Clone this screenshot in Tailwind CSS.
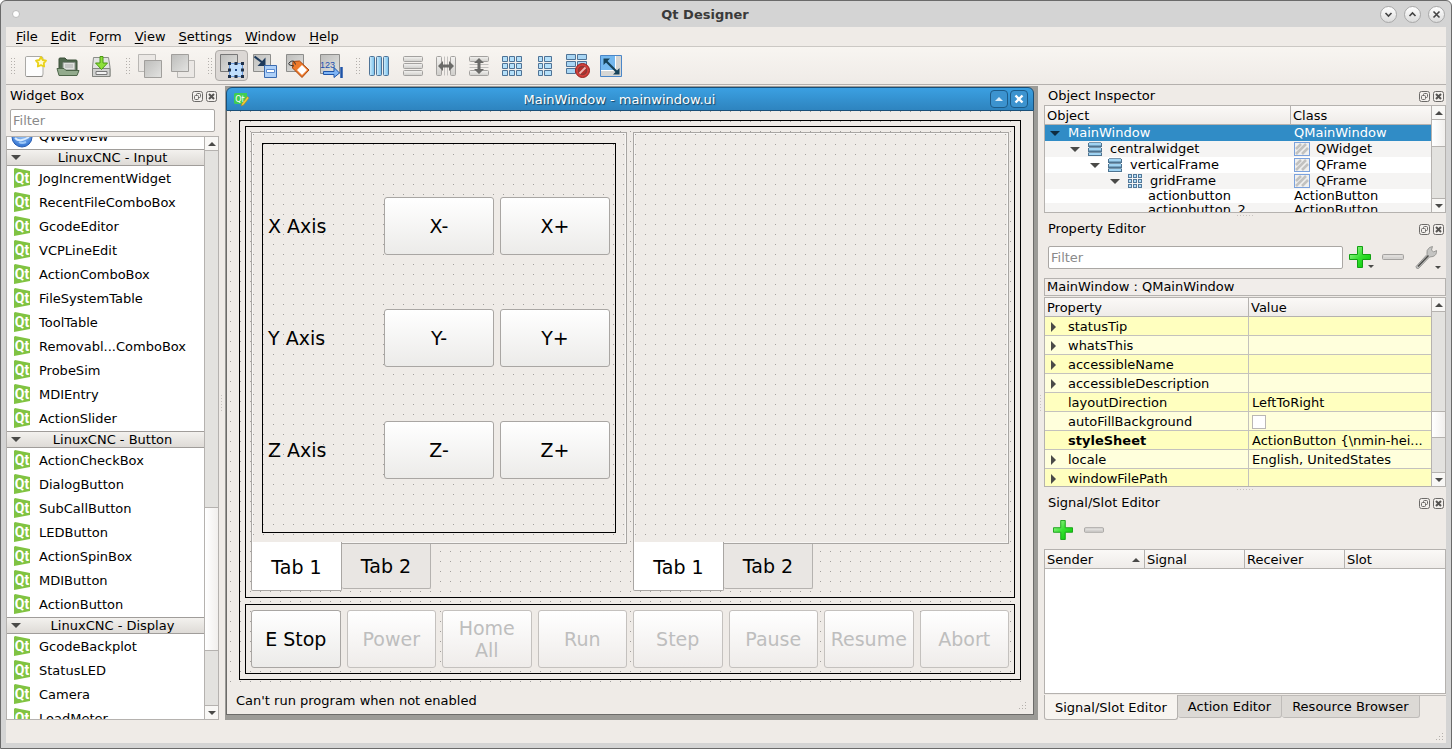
<!DOCTYPE html>
<html lang="en">
<head>
    <meta charset="UTF-8">
    <meta name="viewport" content="width=device-width, initial-scale=1.0">
    <title>Qt Designer</title>
    <script src="https://cdn.jsdelivr.net/npm/@tailwindcss/browser@4"></script>
</head>
<body class="bg-white font-['DejaVu_Sans',sans-serif] text-[13px] leading-4 text-black">

    <!-- Icon definitions -->
    <svg class="absolute w-0 h-0" aria-hidden="true">
        <defs>
            <linearGradient id="blueH" x1="0" y1="0" x2="1" y2="0"><stop offset="0" stop-color="#d3effd"/><stop offset="1" stop-color="#74bdea"/></linearGradient>
            <linearGradient id="blueV" x1="0" y1="0" x2="0" y2="1"><stop offset="0" stop-color="#c3e6fa"/><stop offset="1" stop-color="#6fb4e0"/></linearGradient>
            <linearGradient id="grayV" x1="0" y1="0" x2="0" y2="1"><stop offset="0" stop-color="#f4f3f1"/><stop offset="1" stop-color="#cfcecb"/></linearGradient>
            <linearGradient id="sheet" x1="0" y1="0" x2="1" y2="1"><stop offset="0" stop-color="#bdbdbb"/><stop offset="1" stop-color="#e3e3e1"/></linearGradient>
            <linearGradient id="greenP" x1="0" y1="0" x2="1" y2="1"><stop offset="0" stop-color="#b5f8a8"/><stop offset="0.5" stop-color="#35e030"/><stop offset="1" stop-color="#00c400"/></linearGradient>
            <radialGradient id="globe" cx="0.5" cy="0.3" r="0.7"><stop offset="0" stop-color="#b9dcff"/><stop offset="1" stop-color="#2c6fd0"/></radialGradient>
        </defs>
        <symbol id="qt" viewBox="0 0 16 20">
            <path d="M0 1 1 0 16 3V17L0 20Z" fill="#80c342"/>
            <text x="8" y="15" text-anchor="middle" font-family="Roboto,sans-serif" font-weight="bold" font-size="14" fill="#fff">Qt</text>
        </symbol>
        <symbol id="web" viewBox="0 0 22 22">
            <circle cx="11" cy="11" r="10" fill="url(#globe)" stroke="#2a5db0"/>
            <path d="M4 12q3 3 7 2t7-3" fill="none" stroke="#d8ebff" stroke-width="2"/>
            <path d="M8 16q3 2 7 0" fill="none" stroke="#9cc8f8" stroke-width="2"/>
        </symbol>
        <symbol id="float" viewBox="0 0 11 11">
            <rect x="0.5" y="0.5" width="10" height="10" rx="2" fill="#f3f0ed" stroke="#6c6a68"/>
            <rect x="4.500" y="2.500" width="4" height="4" rx="1" fill="none" stroke="#6c6a68"/>
            <rect x="2.500" y="4.500" width="4" height="4" rx="1" fill="#f3f0ed" stroke="#6c6a68"/>
        </symbol>
        <symbol id="close" viewBox="0 0 11 11">
            <rect x="0.5" y="0.5" width="10" height="10" rx="2" fill="#f3f0ed" stroke="#6c6a68"/>
            <path d="M3 3 8 8M8 3 3 8" stroke="#555351" stroke-width="2"/>
        </symbol>
        <symbol id="up" viewBox="0 0 8 4"><path d="M0 4 4 0 8 4Z" fill="#4a4a48"/></symbol>
        <symbol id="down" viewBox="0 0 8 4"><path d="M0 0H8L4 4Z" fill="#4a4a48"/></symbol>
        <symbol id="branch" viewBox="0 0 10 5"><path d="M0 0H10L5 5Z" fill="#4a4a48"/></symbol>
        <symbol id="plus" viewBox="0 0 22 22">
            <path d="M8.500.5H13.500V8.500H21.500V13.500H13.500V21.500H8.500V13.500H.5V8.500H8.500Z" fill="url(#greenP)" stroke="#12a012" stroke-linejoin="round"/>
        </symbol>
        <symbol id="minus" viewBox="0 0 22 22">
            <rect x="0.5" y="8.500" width="21" height="5" rx="1" fill="#d4d2d0" stroke="#a4a2a0"/>
            <path d="M2 10H20" stroke="#e8e6e4"/>
        </symbol>
        <symbol id="wrench" viewBox="0 0 24 24">
            <path d="M2 21.500 13 9.500Q12 5 15.500 2.500L18.500 1.500 17.500 5 19.500 7 22.500 5.500Q23 10 19 11.500L15.500 12 4.500 23.500Q2 24 2 21.500Z" fill="#c4c4c2" stroke="#8a8a88" stroke-width="0.800"/>
            <path d="M4 21.500 14.500 10.500" stroke="#4c4c4a" stroke-width="1.500"/>
        </symbol>
        <symbol id="vbox" viewBox="0 0 14 14">
            <path d="M0 1H14V5H0ZM0 6H14V10H0ZM0 10.500H14V14H0Z" fill="#4d7390"/>
            <path d="M1 0H13V3.500H1ZM1 5.500H13V8.500H1ZM1 10.500H13V13H1Z" fill="#9fd3f2"/>
            <path d="M1 0.500H13M1 5.500H13M1 10.500H13" stroke="#7796ad"/>
        </symbol>
        <symbol id="gridS" viewBox="0 0 14 14">
            <path d="M0 0h4v4h-4zM5 0h4v4h-4zM10 0h4v4h-4zM0 5h4v4h-4zM5 5h4v4h-4zM10 5h4v4h-4zM0 10h4v4h-4zM5 10h4v4h-4zM10 10h4v4h-4z" fill="#54799a"/>
            <path d="M1 1h2v2h-2zM6 1h2v2h-2zM11 1h2v2h-2zM1 6h2v2h-2zM6 6h2v2h-2zM11 6h2v2h-2zM1 11h2v2h-2zM6 11h2v2h-2zM11 11h2v2h-2z" fill="#b3def7"/>
        </symbol>
        <symbol id="hatch" viewBox="0 0 16 14">
            <rect x="0.5" y="0.5" width="15" height="13" fill="#f0f0ee" stroke="#7ba2dd"/>
            <path d="M2 7 7 2M2 12 12 2M8 12 14 6" stroke="#c2c2c0" stroke-width="2.500"/>
        </symbol>
    </svg>

    <div class="flex h-screen flex-col rounded-t-md border border-[#6a6a6a] bg-[#d4d4d4] px-[5px] pb-[5px]">

        <!-- Title bar -->
        <header class="flex h-[26px] shrink-0 items-center pr-px">
            <div class="flex w-6 pl-1.5"><span class="size-2 rounded-full border border-[#bbb] bg-white"></span></div>
            <h1 class="flex-1 pt-0.5 text-center font-bold text-[#3a3a3a]">Qt Designer</h1>
            <div class="flex gap-[7px]">
                <button aria-label="Minimize" class="flex size-[17px] items-center justify-center rounded-full border border-[#a8a8a8] bg-linear-to-b from-white to-[#dcdcdc]">
                    <svg class="size-[9px]" viewBox="0 0 9 9"><path d="M1.500 3 4.500 6 7.500 3" fill="none" stroke="#444" stroke-width="1.600"/></svg>
                </button>
                <button aria-label="Maximize" class="flex size-[17px] items-center justify-center rounded-full border border-[#a8a8a8] bg-linear-to-b from-white to-[#dcdcdc]">
                    <svg class="size-[9px]" viewBox="0 0 9 9"><path d="M1.500 6 4.500 3 7.500 6" fill="none" stroke="#444" stroke-width="1.600"/></svg>
                </button>
                <button aria-label="Close" class="flex size-[17px] items-center justify-center rounded-full border border-[#a8a8a8] bg-linear-to-b from-white to-[#dcdcdc]">
                    <svg class="size-[9px]" viewBox="0 0 9 9"><path d="M1.500 1.500 7.500 7.500M7.500 1.500 1.500 7.500" fill="none" stroke="#444" stroke-width="1.600"/></svg>
                </button>
            </div>
        </header>

        <div class="flex min-h-0 flex-1 flex-col bg-[#efebe7]">

            <!-- Menu bar -->
            <nav class="flex h-5 shrink-0 items-center gap-px border-b border-[#cbc8c4] pl-1">
                <button class="px-1.5"><u class="underline-offset-2">F</u>ile</button>
                <button class="px-1.5"><u class="underline-offset-2">E</u>dit</button>
                <button class="px-1.5">F<u class="underline-offset-2">o</u>rm</button>
                <button class="px-1.5"><u class="underline-offset-2">V</u>iew</button>
                <button class="px-1.5"><u class="underline-offset-2">S</u>ettings</button>
                <button class="px-1.5"><u class="underline-offset-2">W</u>indow</button>
                <button class="px-1.5"><u class="underline-offset-2">H</u>elp</button>
            </nav>

            <!-- Toolbar -->
            <div class="flex h-[38px] shrink-0 items-center border-b border-[#b4b0ad] bg-linear-to-b from-[#f8f5f1] to-[#efebe7]" role="toolbar">
                <div class="flex w-3 justify-end pr-[3px]"><span class="h-4 w-1 bg-[radial-gradient(circle_at_0_0,#b4b0ac_1px,transparent_1px)] bg-[length:3px_3px]"></span></div>
                <button aria-label="New" class="flex h-[31px] w-[33px] items-center justify-center">
                    <svg class="size-6" viewBox="0 0 24 24"><path d="M3.500 2.500H18Q20 2.500 20 4.500V20Q20 22.500 18 22.500H3.500Q2.500 22.500 2.500 21V4Q2.500 2.500 3.500 2.500Z" fill="#fdfdfd" stroke="#aaa9a6"/><path d="M3.500 22.500H19.500" stroke="#8d8b88"/><path d="M18 3 19.700 6 23 6.700 20.800 9.200 21.200 12.500 18 11.200 14.800 12.500 15.200 9.200 13 6.700 16.300 6Z" fill="#fffbd0" stroke="#ead21a" stroke-width="1.800" stroke-linejoin="round"/></svg>
                </button>
                <button aria-label="Open" class="flex h-[31px] w-[33px] items-center justify-center">
                    <svg class="size-6" viewBox="0 0 24 24"><path d="M3 5Q3 4 4 4H9L11 6H20Q21 6 21 7V18H3Z" fill="#51694f" stroke="#3c513a"/><path d="M7 8.500H19V16H7Z" fill="#dfe2de" stroke="#8a938a"/><path d="M9 11H17M9 13H17" stroke="#aaa"/><path d="M1 14.500H8L10 16.500H23L21 21.500H3Z" fill="#93ab8d" stroke="#4e664a"/></svg>
                </button>
                <button aria-label="Save" class="flex h-[31px] w-[33px] items-center justify-center">
                    <svg class="size-6" viewBox="0 0 24 24"><path d="M4.500 3.500H19.500L21 13V22.500H3.500V13Z" fill="#e2e3e1" stroke="#8b8d89"/><path d="M3.500 14.500H21V22.500H3.500Z" fill="#d0d1cf" stroke="#82847f"/><path d="M7 17.500H18V20.500H7Z" fill="#f2f2f2" stroke="#777"/><path d="M11 2.500H14V9H18.500L12.500 15.500 6.500 9H11Z" fill="#8ee03a" stroke="#4b9a12"/></svg>
                </button>
                <div class="flex w-4 justify-end pr-[3px]"><span class="h-4 w-1 bg-[radial-gradient(circle_at_0_0,#b4b0ac_1px,transparent_1px)] bg-[length:3px_3px]"></span></div>
                <button aria-label="Send to Back" class="flex h-[31px] w-[33px] items-center justify-center">
                    <svg class="size-6" viewBox="0 0 24 24"><path d="M.5.5H17.500V17.500H.5Z" fill="#ebe8e5" stroke="#b9b7b4"/><path d="M6.500 6.500H23.500V23.500H6.500Z" fill="url(#sheet)" stroke="#a19f9c"/></svg>
                </button>
                <button aria-label="Bring to Front" class="flex h-[31px] w-[33px] items-center justify-center">
                    <svg class="size-6" viewBox="0 0 24 24"><path d="M6.500 6.500H23.500V23.500H6.500Z" fill="#ebe8e5" stroke="#b9b7b4"/><path d="M.5.5H17.500V17.500H.5Z" fill="url(#sheet)" stroke="#a19f9c"/></svg>
                </button>
                <div class="flex w-4 justify-end pr-[3px]"><span class="h-4 w-1 bg-[radial-gradient(circle_at_0_0,#b4b0ac_1px,transparent_1px)] bg-[length:3px_3px]"></span></div>
                <button aria-label="Edit Widgets" aria-pressed="true" class="flex h-[31px] w-[33px] items-center justify-center rounded-sm border border-[#aeaba8] bg-[#dcd8d5]">
                    <svg class="size-6 shrink-0" viewBox="0 0 24 24"><path d="M.5.5H17.500V17.500H.5Z" fill="url(#sheet)" stroke="#777"/><path d="M9.500 9.500H22.500V22.500H9.500Z" fill="#c0defc" stroke="#6f9fe0"/><path d="M8 8h3v3h-3zM14.500 8h3v3h-3zM21 8h3v3h-3zM8 14.500h3v3h-3zM21 14.500h3v3h-3zM8 21h3v3h-3zM14.500 21h3v3h-3zM21 21h3v3h-3z" fill="#1f3048"/><path d="M15 15h2v2h-2z" fill="#204a87"/></svg>
                </button>
                <button aria-label="Edit Signals/Slots" class="flex h-[31px] w-[33px] items-center justify-center">
                    <svg class="size-6" viewBox="0 0 24 24"><path d="M.5.5H17.500V17.500H.5Z" fill="url(#sheet)" stroke="#8d8d8b"/><path d="M1.500 2.500 10 9" stroke="#1e3a5c" stroke-width="2.200"/><path d="M12.500 3.500V12H4.500Z" fill="#1e3a5c"/><path d="M11.500 11.500H23.500V23.500H11.500Z" fill="#aed0f8" stroke="#3b6bb0"/><path d="M13.500 15.500H21.500V18.500H13.500Z" fill="#fff" stroke="#5d8cd0"/></svg>
                </button>
                <button aria-label="Edit Buddies" class="flex h-[31px] w-[33px] items-center justify-center">
                    <svg class="size-6" viewBox="0 0 24 24"><path d="M.5.5H17.500V17.500H.5Z" fill="url(#sheet)" stroke="#8d8d8b"/><path d="M7 7.500 13.500 7 23 16 16 23.500 6.500 14Z" fill="#ee7a2c" stroke="#a8460e"/><path d="M16 11 21 16 16 21 11 16Z" fill="#fff"/><path d="M9.500 10.500Q8 5 4 8T8 12" fill="none" stroke="#333"/></svg>
                </button>
                <button aria-label="Edit Tab Order" class="flex h-[31px] w-[33px] items-center justify-center">
                    <svg class="size-6" viewBox="0 0 24 24"><path d="M1.500.5H20.500V19.500H1.500Z" fill="url(#sheet)" stroke="#8d8d8b"/><text x="1" y="14" font-family="'Liberation Sans',sans-serif" font-size="9" fill="#1d4fae">123</text><path d="M4.500 17.500H15V13.500L20.500 19 15 23.500V20.500H4.500Z" fill="#7fb5f5" stroke="#1f54a8"/><path d="M22.500 13V24" stroke="#1f54a8" stroke-width="2.500"/></svg>
                </button>
                <div class="flex w-4 justify-end pr-[3px]"><span class="h-4 w-1 bg-[radial-gradient(circle_at_0_0,#b4b0ac_1px,transparent_1px)] bg-[length:3px_3px]"></span></div>
                <button aria-label="Lay Out Horizontally" class="flex h-[31px] w-[33px] items-center justify-center">
                    <svg class="h-5 w-[21px]" viewBox="0 0 21 20"><g fill="url(#blueH)" stroke="#4f7396"><rect x="0.5" y="0.5" width="5" height="19" rx="1"/><rect x="7.500" y="0.500" width="5" height="19" rx="1"/><rect x="14.500" y="0.500" width="5" height="19" rx="1"/></g></svg>
                </button>
                <button aria-label="Lay Out Vertically" class="flex h-[31px] w-[33px] items-center justify-center">
                    <svg class="size-5" viewBox="0 0 20 20"><g fill="url(#grayV)" stroke="#a3a19f"><rect x="0.5" y="0.5" width="19" height="5" rx="1"/><rect x="0.500" y="7.500" width="19" height="5" rx="1"/><rect x="0.500" y="14.500" width="19" height="5" rx="1"/></g></svg>
                </button>
                <button aria-label="Lay Out Horizontally in Splitter" class="flex h-[31px] w-[33px] items-center justify-center">
                    <svg class="size-5" viewBox="0 0 20 20"><g fill="url(#grayV)" stroke="#a3a19f"><rect x="0.5" y="0.5" width="5" height="19" rx="1"/><rect x="14.500" y="0.500" width="5" height="19" rx="1"/></g><path d="M8.500.5V19.500M11.500.5V19.500" stroke="#c2c0be"/><path d="M2 10 7 5V8.500H13V5L18 10 13 15V11.500H7V15Z" fill="#6a6a68"/></svg>
                </button>
                <button aria-label="Lay Out Vertically in Splitter" class="flex h-[31px] w-[33px] items-center justify-center">
                    <svg class="size-5" viewBox="0 0 20 20"><g fill="url(#grayV)" stroke="#a3a19f"><rect x="0.5" y="0.5" width="19" height="5" rx="1"/><rect x="0.500" y="14.500" width="19" height="5" rx="1"/></g><path d="M.5 8.500H19.500M.5 11.500H19.500" stroke="#c2c0be"/><path d="M10 2 15 7H11.500V13H15L10 18 5 13H8.500V7H5Z" fill="#6a6a68"/></svg>
                </button>
                <button aria-label="Lay Out in a Grid" class="flex h-[31px] w-[33px] items-center justify-center">
                    <svg class="size-5" viewBox="0 0 20 20"><g fill="#b5e0fa" stroke="#4f7396"><path d="M.5.5h5v5h-5zM7.500.5h5v5h-5zM14.500.5h5v5h-5zM.5 7.500h5v5h-5zM7.500 7.500h5v5h-5zM14.500 7.500h5v5h-5zM.5 14.500h5v5h-5zM7.500 14.500h5v5h-5zM14.500 14.500h5v5h-5z"/></g></svg>
                </button>
                <button aria-label="Lay Out in a Form" class="flex h-[31px] w-[33px] items-center justify-center">
                    <svg class="h-5 w-3.5" viewBox="0 0 14 20"><g fill="#b5e0fa" stroke="#4f7396"><path d="M.5.5h4v5h-4zM6.500.5h7v5h-7zM.5 7.500h4v5h-4zM6.500 7.500h7v5h-7zM.5 14.500h4v5h-4zM6.500 14.500h7v5h-7z"/></g></svg>
                </button>
                <button aria-label="Break Layout" class="flex h-[31px] w-[33px] items-center justify-center">
                    <svg class="size-6" viewBox="0 0 24 24"><g fill="#a9d6f4" stroke="#4f7396"><path d="M.5.5h9v5h-9zM11.500.5h9v5h-9zM.5 7.500h9v5h-9zM11.500 7.500h9v5h-9zM.5 14.500h9v5h-9z"/></g><circle cx="16.500" cy="16.500" r="7" fill="#d2403c" stroke="#96201c"/><circle cx="16.500" cy="16.500" r="4" fill="#b8302c" stroke="#8a3a36" stroke-width="1.500"/><path d="M13.500 19.500 19.500 13.500" stroke="#f0b8b4" stroke-width="1.800"/></svg>
                </button>
                <button aria-label="Adjust Size" class="flex h-[31px] w-[33px] items-center justify-center">
                    <svg class="size-6" viewBox="0 0 24 24"><path d="M1.500 1.500H22.500V22.500H1.500Z" fill="#d6d6d4" stroke="#4a86c8"/><path d="M2 2H16V16H2Z" fill="#74b8ef"/><path d="M16.500 2V16.500H2" fill="none" stroke="#fff"/><path d="M7 7 18 18" stroke="#16425a" stroke-width="2.200"/><path d="M4.500 4.500H11L4.500 11ZM20.500 20.500H14L20.500 14Z" fill="#16425a"/></svg>
                </button>
            </div>

            <main class="flex min-h-0 flex-1">

                <!-- Widget box -->
                <section class="flex w-[213px] shrink-0 flex-col">
                    <div class="flex h-5 items-center gap-[3px] pt-0.5 pr-0.5 pl-1">
                        <h2 class="flex-1">Widget Box</h2>
                        <button aria-label="Float Widget Box"><svg class="size-[11px]"><use href="#float"/></svg></button>
                        <button aria-label="Close Widget Box"><svg class="size-[11px]"><use href="#close"/></svg></button>
                    </div>
                    <input type="text" aria-label="Filter widgets" placeholder="Filter" class="mx-1 my-1 h-[23px] rounded-xs border border-[#aaa7a4] bg-white px-0.5 placeholder:text-[#8a8a8a]">
                    <div class="flex min-h-0 flex-1 border border-[#b5b2af] bg-white">
                        <div class="flex-1 overflow-hidden">
                            <ul id="widgetList" class="-mt-3"></ul>
                        </div>
                        <div class="flex w-3.5 flex-col border-l border-[#b5b2af] bg-[#e3e2df]">
                            <button aria-label="Scroll up" class="flex h-3.5 items-center justify-center border-b border-[#b5b2af] bg-[#f8f7f5]"><svg class="h-1 w-2"><use href="#up"/></svg></button>
                            <div class="grow-[358]"></div>
                            <div class="grow-[143] border-y border-[#b5b2af] bg-linear-to-r from-white to-[#f1efed]"></div>
                            <div class="grow-[54]"></div>
                            <button aria-label="Scroll down" class="flex h-3.5 items-center justify-center border-t border-[#b5b2af] bg-[#f8f7f5]"><svg class="h-1 w-2"><use href="#down"/></svg></button>
                        </div>
                    </div>
                </section>

                <div class="flex w-1.5 shrink-0 items-center justify-center"><span class="h-4 w-0.5 bg-[radial-gradient(circle_at_0_0,#c8c4c0_1px,transparent_1px)] bg-[length:3px_3px]"></span></div>

                <!-- Form area -->
                <section class="mt-px flex min-w-0 flex-1 flex-col bg-[#9c9b97] pt-px pr-1 pb-[5px] pl-px">
                    <div class="flex h-6 items-center rounded-t-md border border-[#194f78] bg-linear-to-b from-[#3ba0e2] to-[#2e84bf] pr-[5px] pl-1.5">
                        <svg class="size-4" viewBox="0 0 16 16"><path d="M2 2H14V10L11 13H2L1 12V3Z" fill="#41cd52"/><text x="7" y="11" text-anchor="middle" font-family="'DejaVu Sans',sans-serif" font-size="8" fill="#fff">Qt</text><path d="M14.500 5.500 9 12.500 8 15 10.500 14 16 7Z" fill="#f3c73a" stroke="#a98419" stroke-width="0.500"/></svg>
                        <h2 class="flex-1 pt-0.5 text-center text-white text-shadow-[1px_1px_1px_#0008]">MainWindow - mainwindow.ui</h2>
                        <div class="flex gap-0.5">
                            <button aria-label="Shade" class="flex size-[18px] items-center justify-center rounded-sm border border-[#1d5b88] bg-[#3c93cf]"><svg class="h-1 w-2" viewBox="0 0 8 4"><path d="M0 4 4 0 8 4Z" fill="#d8ecfa"/></svg></button>
                            <button aria-label="Close form" class="flex size-[18px] items-center justify-center rounded-sm border border-[#1d5b88] bg-[#3c93cf]"><svg class="size-2.5" viewBox="0 0 10 10"><path d="M1.500 1.500 8.500 8.500M8.500 1.500 1.500 8.500" stroke="#fff" stroke-width="2.400"/></svg></button>
                        </div>
                    </div>
                    <div class="flex min-h-0 flex-1 flex-col border-x border-b border-[#6c6b69] bg-[#efebe7] px-[3px] pb-[3px]">
                        <div class="flex min-h-0 flex-1 flex-col bg-[radial-gradient(circle_at_0_0,#a3a09d_1px,transparent_1px)] bg-[length:10px_10px] p-[9px] text-[19px] leading-[22px]">
                            <div class="flex min-h-0 flex-1 flex-col gap-1.5 border border-black p-[5px]">

                                <div class="grid min-h-0 flex-1 grid-cols-2 gap-1.5 border border-black p-[5px]">
                                    <div class="flex min-h-0 flex-col">
                                        <div class="flex min-h-0 flex-1 border border-[#a9a6a3]">
                                            <div class="flex flex-1 border border-[#f8f6f4] bg-[#efebe7] bg-[radial-gradient(circle_at_0_0,#a3a09d_1px,transparent_1px)] bg-[length:10px_10px] p-[9px]">
                                                <div class="grid flex-1 grid-cols-[1fr_110px_110px] content-center items-center gap-x-1.5 gap-y-[54px] border border-black px-[5px]">
                                                    <span>X Axis</span>
                                                    <button class="h-[58px] rounded-[3px] border border-[#a9a6a3] bg-linear-to-b from-white to-[#ecebe9]">X-</button>
                                                    <button class="h-[58px] rounded-[3px] border border-[#a9a6a3] bg-linear-to-b from-white to-[#ecebe9]">X+</button>
                                                    <span>Y Axis</span>
                                                    <button class="h-[58px] rounded-[3px] border border-[#a9a6a3] bg-linear-to-b from-white to-[#ecebe9]">Y-</button>
                                                    <button class="h-[58px] rounded-[3px] border border-[#a9a6a3] bg-linear-to-b from-white to-[#ecebe9]">Y+</button>
                                                    <span>Z Axis</span>
                                                    <button class="h-[58px] rounded-[3px] border border-[#a9a6a3] bg-linear-to-b from-white to-[#ecebe9]">Z-</button>
                                                    <button class="h-[58px] rounded-[3px] border border-[#a9a6a3] bg-linear-to-b from-white to-[#ecebe9]">Z+</button>
                                                </div>
                                            </div>
                                        </div>
                                        <div class="flex h-12 shrink-0 items-start" role="tablist">
                                            <button role="tab" aria-selected="true" class="-mt-0.5 h-[49px] w-[91px] rounded-b-xs border-x border-b border-[#a9a6a3] bg-white pt-0.5">Tab 1</button>
                                            <button role="tab" class="h-[45px] w-[89px] rounded-b-xs border-r border-b border-[#b5b2af] bg-[#e9e6e3]">Tab 2</button>
                                        </div>
                                    </div>
                                    <div class="flex min-h-0 flex-col">
                                        <div class="flex min-h-0 flex-1 border border-[#a9a6a3]">
                                            <div class="flex-1 border border-[#f8f6f4] bg-[#efebe7] bg-[radial-gradient(circle_at_0_0,#a3a09d_1px,transparent_1px)] bg-[length:10px_10px]"></div>
                                        </div>
                                        <div class="flex h-12 shrink-0 items-start" role="tablist">
                                            <button role="tab" aria-selected="true" class="-mt-0.5 h-[49px] w-[91px] rounded-b-xs border-x border-b border-[#a9a6a3] bg-white pt-0.5">Tab 1</button>
                                            <button role="tab" class="h-[45px] w-[89px] rounded-b-xs border-r border-b border-[#b5b2af] bg-[#e9e6e3]">Tab 2</button>
                                        </div>
                                    </div>
                                </div>

                                <div class="grid shrink-0 grid-cols-8 gap-1.5 border border-black p-[5px]">
                                    <button class="h-[58px] rounded-[3px] border border-[#a9a6a3] bg-linear-to-b from-white to-[#ecebe9]">E Stop</button>
                                    <button disabled class="h-[58px] rounded-[3px] border border-[#c4c1be] bg-linear-to-b from-white to-[#efecea] text-[#bebebe]">Power</button>
                                    <button disabled class="h-[58px] rounded-[3px] border border-[#c4c1be] bg-linear-to-b from-white to-[#efecea] text-[#bebebe]">Home<br>All</button>
                                    <button disabled class="h-[58px] rounded-[3px] border border-[#c4c1be] bg-linear-to-b from-white to-[#efecea] text-[#bebebe]">Run</button>
                                    <button disabled class="h-[58px] rounded-[3px] border border-[#c4c1be] bg-linear-to-b from-white to-[#efecea] text-[#bebebe]">Step</button>
                                    <button disabled class="h-[58px] rounded-[3px] border border-[#c4c1be] bg-linear-to-b from-white to-[#efecea] text-[#bebebe]">Pause</button>
                                    <button disabled class="h-[58px] rounded-[3px] border border-[#c4c1be] bg-linear-to-b from-white to-[#efecea] text-[#bebebe]">Resume</button>
                                    <button disabled class="h-[58px] rounded-[3px] border border-[#c4c1be] bg-linear-to-b from-white to-[#efecea] text-[#bebebe]">Abort</button>
                                </div>
                            </div>
                        </div>
                        <div class="flex h-[22px] shrink-0 items-center justify-between pt-0.5 pr-0.5 pl-1.5">
                            <span>Can't run program when not enabled</span>
                            <span class="mt-2 size-3 bg-[radial-gradient(circle_at_0_0,#b4b0ac_1px,transparent_1px)] bg-[length:3px_3px] [clip-path:polygon(100%_0,100%_100%,0_100%)]"></span>
                        </div>
                    </div>
                </section>

                <div class="flex w-1.5 shrink-0 items-center justify-center"><span class="h-4 w-0.5 bg-[radial-gradient(circle_at_0_0,#c8c4c0_1px,transparent_1px)] bg-[length:3px_3px]"></span></div>

                <div class="flex w-[402px] shrink-0 flex-col">

                    <!-- Object inspector -->
                    <div class="flex h-5 shrink-0 items-center gap-[3px] pt-0.5 pr-0.5 pl-1">
                        <h2 class="flex-1">Object Inspector</h2>
                        <button aria-label="Float Object Inspector"><svg class="size-[11px]"><use href="#float"/></svg></button>
                        <button aria-label="Close Object Inspector"><svg class="size-[11px]"><use href="#close"/></svg></button>
                    </div>
                    <div class="flex h-[108px] shrink-0 border border-[#b5b2af] bg-white">
                        <div class="flex-1 overflow-hidden">
                            <table class="w-full table-fixed border-separate border-spacing-0">
                                <thead>
                                    <tr class="h-[19px] bg-linear-to-b from-[#fbf9f7] to-[#eeebe8] text-left">
                                        <th class="border-r border-b border-[#b5b2af] p-0 pt-0.5 pl-0.5 font-normal">Object</th>
                                        <th class="w-[140px] border-b border-[#b5b2af] p-0 pt-0.5 pl-0.5 font-normal">Class</th>
                                    </tr>
                                </thead>
                                <tbody>
                                    <tr class="h-4 bg-[#308cc6] text-white">
                                        <td class="p-0"><div class="flex items-center gap-2 pl-[5px]"><svg class="h-[5px] w-2.5" viewBox="0 0 10 5"><path d="M0 0H10L5 5Z" fill="#0f2c40"/></svg>MainWindow</div></td>
                                        <td class="p-0 pl-[3px]">QMainWindow</td>
                                    </tr>
                                    <tr class="h-4 bg-[#f5f4f3]">
                                        <td class="p-0"><div class="flex items-center pl-[25px]"><svg class="mr-2 h-[5px] w-2.5"><use href="#branch"/></svg><svg class="mr-2 size-3.5"><use href="#vbox"/></svg>centralwidget</div></td>
                                        <td class="p-0 pl-[3px]"><div class="flex items-center gap-1.5"><svg class="h-3.5 w-4"><use href="#hatch"/></svg>QWidget</div></td>
                                    </tr>
                                    <tr class="h-4">
                                        <td class="p-0"><div class="flex items-center pl-[45px]"><svg class="mr-2 h-[5px] w-2.5"><use href="#branch"/></svg><svg class="mr-2 size-3.5"><use href="#vbox"/></svg>verticalFrame</div></td>
                                        <td class="p-0 pl-[3px]"><div class="flex items-center gap-1.5"><svg class="h-3.5 w-4"><use href="#hatch"/></svg>QFrame</div></td>
                                    </tr>
                                    <tr class="h-4 bg-[#f5f4f3]">
                                        <td class="p-0"><div class="flex items-center pl-[65px]"><svg class="mr-2 h-[5px] w-2.5"><use href="#branch"/></svg><svg class="mr-2 size-3.5"><use href="#gridS"/></svg>gridFrame</div></td>
                                        <td class="p-0 pl-[3px]"><div class="flex items-center gap-1.5"><svg class="h-3.5 w-4"><use href="#hatch"/></svg>QFrame</div></td>
                                    </tr>
                                    <tr class="h-[14px] leading-[14px]">
                                        <td class="p-0 pl-[103px]">actionbutton</td>
                                        <td class="p-0 pl-[3px]">ActionButton</td>
                                    </tr>
                                    <tr class="h-[14px] bg-[#f5f4f3] leading-[14px]">
                                        <td class="p-0 pl-[103px]">actionbutton_2</td>
                                        <td class="p-0 pl-[3px]">ActionButton</td>
                                    </tr>
                                </tbody>
                            </table>
                        </div>
                        <div class="flex w-3.5 flex-col border-l border-[#b5b2af] bg-[#e3e2df]">
                            <button aria-label="Scroll up" class="flex h-3.5 items-center justify-center border-b border-[#b5b2af] bg-[#f8f7f5]"><svg class="h-1 w-2"><use href="#up"/></svg></button>
                            <div class="grow-[26] border-b border-[#b5b2af] bg-linear-to-r from-white to-[#f1efed]"></div>
                            <div class="grow-[52]"></div>
                            <button aria-label="Scroll down" class="flex h-3.5 items-center justify-center border-t border-[#b5b2af] bg-[#f8f7f5]"><svg class="h-1 w-2"><use href="#down"/></svg></button>
                        </div>
                    </div>
                    <div class="flex h-[5px] shrink-0 items-center justify-center"><span class="h-0.5 w-4 bg-[radial-gradient(circle_at_0_0,#c8c4c0_1px,transparent_1px)] bg-[length:3px_3px]"></span></div>

                    <!-- Property editor -->
                    <div class="flex h-5 shrink-0 items-center gap-[3px] pt-0.5 pr-0.5 pl-1">
                        <h2 class="flex-1">Property Editor</h2>
                        <button aria-label="Float Property Editor"><svg class="size-[11px]"><use href="#float"/></svg></button>
                        <button aria-label="Close Property Editor"><svg class="size-[11px]"><use href="#close"/></svg></button>
                    </div>
                    <div class="flex h-10 shrink-0 items-center pr-[5px] pb-0.5 pl-1">
                        <input type="text" aria-label="Filter properties" placeholder="Filter" class="h-[23px] min-w-0 flex-1 rounded-xs border border-[#aaa7a4] bg-white px-0.5 placeholder:text-[#8a8a8a]">
                        <button aria-label="Add dynamic property" class="ml-1.5 flex items-end"><svg class="size-[22px]"><use href="#plus"/></svg><svg class="-ml-[3px] h-[3px] w-1.5"><use href="#down"/></svg></button>
                        <button aria-label="Remove dynamic property" class="ml-2"><svg class="size-[22px]"><use href="#minus"/></svg></button>
                        <button aria-label="Configure Property Editor" class="ml-2.5 flex items-end"><svg class="size-6"><use href="#wrench"/></svg><svg class="-ml-[3px] h-[3px] w-1.5"><use href="#down"/></svg></button>
                    </div>
                    <div class="flex h-[18px] shrink-0 items-center border border-[#b5b2af] bg-[#f1edea] pl-0.5">MainWindow : QMainWindow</div>
                    <div class="mt-px flex h-[190px] shrink-0 border border-[#b5b2af] bg-white">
                        <div class="flex-1 overflow-hidden">
                            <table class="w-full table-fixed border-separate border-spacing-0">
                                <thead>
                                    <tr class="h-[19px] bg-linear-to-b from-[#fbf9f7] to-[#eeebe8] text-left">
                                        <th class="border-r border-b border-[#b5b2af] p-0 pt-0.5 pl-0.5 font-normal">Property</th>
                                        <th class="w-[182px] border-b border-[#b5b2af] p-0 pt-0.5 pl-0.5 font-normal">Value</th>
                                    </tr>
                                </thead>
                                <tbody id="propertyRows"></tbody>
                            </table>
                        </div>
                        <div class="flex w-3.5 flex-col border-l border-[#b5b2af] bg-[#e3e2df]">
                            <button aria-label="Scroll up" class="flex h-3.5 items-center justify-center border-b border-[#b5b2af] bg-[#f8f7f5]"><svg class="h-1 w-2"><use href="#up"/></svg></button>
                            <div class="grow-[100]"></div>
                            <div class="grow-[26] border-y border-[#b5b2af] bg-linear-to-r from-white to-[#f1efed]"></div>
                            <div class="grow-[34]"></div>
                            <button aria-label="Scroll down" class="flex h-3.5 items-center justify-center border-t border-[#b5b2af] bg-[#f8f7f5]"><svg class="h-1 w-2"><use href="#down"/></svg></button>
                        </div>
                    </div>
                    <div class="flex h-[5px] shrink-0 items-center justify-center"><span class="h-0.5 w-4 bg-[radial-gradient(circle_at_0_0,#c8c4c0_1px,transparent_1px)] bg-[length:3px_3px]"></span></div>

                    <!-- Signal/slot editor -->
                    <div class="flex h-5 shrink-0 items-center gap-[3px] pt-0.5 pr-0.5 pl-1">
                        <h2 class="flex-1">Signal/Slot Editor</h2>
                        <button aria-label="Float Signal/Slot Editor"><svg class="size-[11px]"><use href="#float"/></svg></button>
                        <button aria-label="Close Signal/Slot Editor"><svg class="size-[11px]"><use href="#close"/></svg></button>
                    </div>
                    <div class="flex h-[37px] shrink-0 items-center gap-[11px] pb-0.5 pl-[9px]">
                        <button aria-label="Add connection"><svg class="size-5"><use href="#plus"/></svg></button>
                        <button aria-label="Remove connection"><svg class="size-5"><use href="#minus"/></svg></button>
                    </div>
                    <div class="min-h-0 flex-1 border border-[#b5b2af] bg-white">
                        <table class="w-full table-fixed border-separate border-spacing-0">
                            <thead>
                                <tr class="h-[19px] bg-linear-to-b from-[#fbf9f7] to-[#eeebe8] text-left">
                                    <th class="border-r border-b border-[#b5b2af] p-0 pt-0.5 pl-0.5 font-normal"><div class="flex items-center justify-between pr-1">Sender<svg class="h-1 w-2"><use href="#up"/></svg></div></th>
                                    <th class="border-r border-b border-[#b5b2af] p-0 pt-0.5 pl-0.5 font-normal">Signal</th>
                                    <th class="border-r border-b border-[#b5b2af] p-0 pt-0.5 pl-0.5 font-normal">Receiver</th>
                                    <th class="border-b border-[#b5b2af] p-0 pt-0.5 pl-0.5 font-normal">Slot</th>
                                </tr>
                            </thead>
                        </table>
                    </div>
                    <div class="mt-px flex h-[25px] shrink-0 items-start" role="tablist">
                        <button role="tab" aria-selected="true" class="h-[25px] rounded-b-[3px] border-x border-b border-[#b5b2af] bg-[#f7f4f0] px-2.5 pt-0.5">Signal/Slot Editor</button>
                        <button role="tab" class="h-[23px] rounded-b-[3px] border-t border-r border-b border-[#bfbcb9] bg-[#dcd9d5] px-2.5">Action Editor</button>
                        <button role="tab" class="h-[23px] rounded-b-[3px] border-t border-r border-b border-[#bfbcb9] bg-[#dcd9d5] px-2.5">Resource Browser</button>
                        <span class="flex-1 border-t border-[#bfbcb9]"></span>
                    </div>
                </div>
            </main>

            <!-- Status bar -->
            <footer class="flex h-[23px] shrink-0 items-end justify-end">
                <span class="mr-px mb-px size-3 bg-[radial-gradient(circle_at_0_0,#b4b0ac_1px,transparent_1px)] bg-[length:3px_3px] [clip-path:polygon(100%_0,100%_100%,0_100%)]"></span>
            </footer>
        </div>
    </div>

    <script>
        const widgetGroups = [
            { title: 'LinuxCNC - Input', items: ['JogIncrementWidget', 'RecentFileComboBox', 'GcodeEditor', 'VCPLineEdit', 'ActionComboBox', 'FileSystemTable', 'ToolTable', 'Removabl...ComboBox', 'ProbeSim', 'MDIEntry', 'ActionSlider'] },
            { title: 'LinuxCNC - Button', items: ['ActionCheckBox', 'DialogButton', 'SubCallButton', 'LEDButton', 'ActionSpinBox', 'MDIButton', 'ActionButton'] },
            { title: 'LinuxCNC - Display', items: ['GcodeBackplot', 'StatusLED', 'Camera', 'LoadMeter'] }
        ];

        let listHtml = `<li class="flex h-6 items-center gap-1.5 pl-1"><svg class="size-[22px]"><use href="#web"/></svg>QWebView</li>`;
        widgetGroups.forEach(group => {
            listHtml += `<li class="flex h-[17px] items-center border-b border-t border-[#a09d9a] bg-linear-to-b from-[#f3f1ee] to-[#dedbd7] pl-1">
                <svg class="h-[5px] w-2.5"><use href="#branch"/></svg>
                <span class="flex-1 text-center">${group.title}</span></li>`;
            group.items.forEach(name => {
                listHtml += `<li class="flex h-6 items-center gap-[9px] pl-[7px]"><svg class="h-5 w-4"><use href="#qt"/></svg><span class="pt-0.5">${name}</span></li>`;
            });
            listHtml += '<li class="h-px" aria-hidden="true"></li>';
        });
        document.getElementById('widgetList').innerHTML = listHtml;

        const properties = [
            { name: 'statusTip', expandable: true, value: '' },
            { name: 'whatsThis', expandable: true, value: '' },
            { name: 'accessibleName', expandable: true, value: '' },
            { name: 'accessibleDescription', expandable: true, value: '' },
            { name: 'layoutDirection', value: 'LeftToRight' },
            { name: 'autoFillBackground', value: '<input type="checkbox" aria-label="autoFillBackground" class="block size-3.5 appearance-none border border-[#bab7b4] bg-white">' },
            { name: 'styleSheet', bold: true, value: 'ActionButton {\\nmin-hei...' },
            { name: 'locale', expandable: true, value: 'English, UnitedStates' },
            { name: 'windowFilePath', expandable: true, value: '' }
        ];

        document.getElementById('propertyRows').innerHTML = properties.map((prop, i) => {
            const arrow = prop.expandable
                ? '<svg class="mr-3 h-2.5 w-[5px]" viewBox="0 0 5 10"><path d="M0 0 5 5 0 10Z" fill="#4a4a48"/></svg>'
                : '<span class="mr-3 w-[5px]"></span>';
            return `<tr class="h-[19px] ${i % 2 ? 'bg-[#ffffdc]' : 'bg-[#ffffbf]'}">
                <td class="border-r border-b border-[#c4c2bd] p-0 pt-0.5"><div class="flex items-center pl-1.5 ${prop.bold ? 'font-bold' : ''}">${arrow}${prop.name}</div></td>
                <td class="border-b border-[#c4c2bd] p-0 pt-0.5 pl-[3px] whitespace-nowrap">${prop.value}</td>
            </tr>`;
        }).join('');
    </script>
</body>
</html>
